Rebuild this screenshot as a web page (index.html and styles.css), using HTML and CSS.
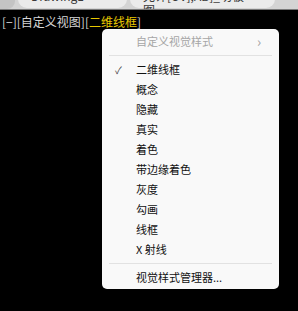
FILE: index.html
```html
<!DOCTYPE html>
<html lang="zh-CN">
<head>
  <meta charset="UTF-8" />
  <title>视觉样式</title>
  <link rel="stylesheet" href="styles.css">
</head>
<body>
  <div class="tabbar">
    <div class="tab-stub"></div>
    <div class="tab tab-first">Drawing1<span class="tab-x">×</span></div>
    <div class="tab">允许[UV],AB]_切板图<span class="tab-x">×</span></div>
  </div>

  <div class="viewport">
    <div class="vp-label">[−][自定义视图][<span class="vp-current">二维线框</span>]</div>

    <div class="menu">
      <div class="menu-item disabled">
        <span class="check"></span>
        <span class="label">自定义视觉样式</span>
        <span class="arrow">›</span>
      </div>
      <div class="sep"></div>
      <div class="menu-item"><span class="check">✓</span><span class="label">二维线框</span></div>
      <div class="menu-item"><span class="check"></span><span class="label">概念</span></div>
      <div class="menu-item"><span class="check"></span><span class="label">隐藏</span></div>
      <div class="menu-item"><span class="check"></span><span class="label">真实</span></div>
      <div class="menu-item"><span class="check"></span><span class="label">着色</span></div>
      <div class="menu-item"><span class="check"></span><span class="label">带边缘着色</span></div>
      <div class="menu-item"><span class="check"></span><span class="label">灰度</span></div>
      <div class="menu-item"><span class="check"></span><span class="label">勾画</span></div>
      <div class="menu-item"><span class="check"></span><span class="label">线框</span></div>
      <div class="menu-item"><span class="check"></span><span class="label">X 射线</span></div>
      <div class="sep"></div>
      <div class="menu-item"><span class="check"></span><span class="label">视觉样式管理器...</span></div>
    </div>
  </div>
</body>
</html>
```

FILE: styles.css
```css
body {
  margin: 0;
  background: #000;
  font-family: "Noto Sans CJK SC", "Noto Sans", sans-serif;
  width: 298px;
  height: 311px;
  overflow: hidden;
}
.tabbar {
  height: 9px;
  background: #d4d4d4;
  border-bottom: 1px solid #7a7a7a;
  display: flex;
  overflow: hidden;
  gap: 3px;
}
.tab-stub {
  width: 15px;
  height: 9px;
  background: #c4c4c4;
  border-radius: 0 0 8px 0;
}
.tab {
  width: 118px;
  margin-top: -11px;
  height: 19px;
  padding: 0 14px 0 13px;
  font-size: 12px;
  line-height: 14px;
  color: #3a3a3a;
  background: #ebebeb;
  border-radius: 0 0 9px 9px;
  display: flex;
  justify-content: space-between;
}
.tab-first {
  width: 82px;
}
.tab-x {
  color: #999;
  font-size: 11px;
}
.viewport {
  position: relative;
  height: 301px;
}
.vp-label {
  padding: 3px 0 0 2px;
  font-size: 12px;
  line-height: 18px;
  color: #d6d6d6;
}
.vp-current {
  color: #e8c800;
}
.menu {
  position: absolute;
  left: 102px;
  top: 19px;
  width: 177px;
  padding: 2px 0;
  background: #f9f9f9;
  border-radius: 5px;
  box-shadow: 0 1px 3px rgba(0, 0, 0, 0.3);
}
.menu-item {
  display: flex;
  align-items: center;
  height: 20px;
  font-size: 11px;
  color: #111;
}
.check {
  width: 34px;
  padding-left: 13px;
  box-sizing: border-box;
  font-size: 10px;
  color: #444;
}
.label {
  flex: 1;
}
.disabled {
  color: #a6a6a6;
}
.arrow {
  width: 22px;
  font-size: 14px;
  color: #a0a0a0;
}
.sep {
  height: 1px;
  background: #e2e2e2;
  margin: 4px 7px 3px;
}
```
